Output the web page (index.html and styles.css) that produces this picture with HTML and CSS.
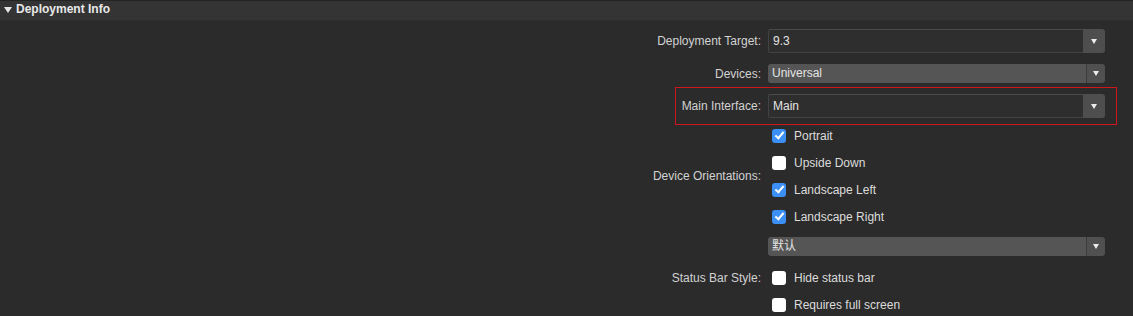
FILE: index.html
```html
<!DOCTYPE html>
<html lang="en">
<head>
    <meta charset="UTF-8">
    <title>Deployment Info</title>
    <link rel="stylesheet" href="styles.css">
</head>
<body>
    <div class="section">
        <div class="section-header">
            <span class="disclosure"></span>
            <span class="section-title">Deployment Info</span>
        </div>

        <div class="form">
            <div class="row row-target">
                <div class="label">Deployment Target:</div>
                <div class="combo">
                    <div class="combo-field">9.3</div>
                    <div class="combo-btn"><span class="arrow"></span></div>
                </div>
            </div>

            <div class="row row-devices">
                <div class="label">Devices:</div>
                <div class="popup">
                    <div class="popup-field">Universal</div>
                    <div class="popup-btn"><span class="arrow"></span></div>
                </div>
            </div>

            <div class="row row-main highlighted">
                <div class="label">Main Interface:</div>
                <div class="combo">
                    <div class="combo-field">Main</div>
                    <div class="combo-btn"><span class="arrow"></span></div>
                </div>
            </div>

            <div class="row row-orient">
                <div class="label">Device Orientations:</div>
                <div class="checks">
                    <label class="check"><span class="box checked"></span>Portrait</label>
                    <label class="check"><span class="box"></span>Upside Down</label>
                    <label class="check"><span class="box checked"></span>Landscape Left</label>
                    <label class="check"><span class="box checked"></span>Landscape Right</label>
                </div>
            </div>

            <div class="row row-status">
                <div class="label">Status Bar Style:</div>
                <div class="checks">
                    <div class="popup">
                        <div class="popup-field cjk">默认</div>
                        <div class="popup-btn"><span class="arrow"></span></div>
                    </div>
                    <label class="check"><span class="box"></span>Hide status bar</label>
                    <label class="check"><span class="box"></span>Requires full screen</label>
                </div>
            </div>
        </div>
    </div>
</body>
</html>
```

FILE: styles.css
```css
html, body {
    margin: 0;
    padding: 0;
}
body {
    font-family: "Liberation Sans", Arial, sans-serif;
    font-size: 12px;
    background-color: #2b2b2b;
    color: #d6d6d6;
    width: 1133px;
    height: 316px;
    overflow: hidden;
}
.section-header {
    height: 19px;
    display: flex;
    align-items: center;
    background-color: #343434;
    border-top: 1px solid #232323;
    border-bottom: 1px solid #2e2e2e;
    padding-left: 4px;
}
.disclosure {
    width: 0;
    height: 0;
    border-left: 4px solid transparent;
    border-right: 4px solid transparent;
    border-top: 6px solid #e6e6e6;
    margin-right: 4px;
    margin-top: -2px;
}
.section-title {
    font-weight: bold;
    color: #e8e8e8;
    margin-top: -3px;
}
.form {
    padding-top: 8px;
}
.row {
    display: flex;
    align-items: center;
}
.label {
    width: 761px;
    text-align: right;
    margin-right: 7px;
    color: #d2d2d2;
}
.row-devices {
    margin-top: 11px;
}
.row-main {
    margin-top: 11px;
}
.row-orient {
    margin-top: 4px;
}
.row-status {
    margin-top: 7px;
}
.highlighted {
    position: relative;
}
.highlighted::after {
    content: "";
    position: absolute;
    left: 675px;
    top: -7px;
    width: 440px;
    height: 36px;
    border: 1px solid #d0161b;
}

/* combo box: text field + button */
.combo {
    width: 337px;
    height: 24px;
    display: flex;
}
.combo-field {
    flex: 1;
    background-color: #2e2e2e;
    border: 1px solid #424242;
    border-top-color: #4a4a4a;
    border-right: none;
    border-radius: 2px 0 0 2px;
    color: #e4e4e4;
    padding-left: 4px;
    line-height: 22px;
}
.combo-btn {
    width: 22px;
    background-color: #4e4e4e;
    border-radius: 0 3px 3px 0;
    display: flex;
    align-items: center;
    justify-content: center;
}

/* popup button */
.popup {
    width: 337px;
    height: 19px;
    display: flex;
    border-radius: 3px;
    overflow: hidden;
}
.popup-field {
    flex: 1;
    background-color: #555555;
    color: #e4e4e4;
    padding-left: 4px;
    line-height: 19px;
}
.popup-btn {
    width: 18px;
    background-color: #505050;
    border-left: 1px solid #3c3c3c;
    display: flex;
    align-items: center;
    justify-content: center;
}
.cjk {
    font-family: "Liberation Sans", "Noto Sans CJK SC", sans-serif;
}
.arrow {
    width: 0;
    height: 0;
    border-left: 3.5px solid transparent;
    border-right: 3.5px solid transparent;
    border-top: 5px solid #ececec;
}

/* checkboxes */
.checks {
    display: flex;
    flex-direction: column;
}
.check {
    display: flex;
    align-items: center;
    height: 27px;
    color: #dcdcdc;
    padding-left: 4px;
}
.box {
    width: 14px;
    height: 14px;
    border-radius: 3px;
    background-color: #ffffff;
    margin-right: 8px;
    position: relative;
}
.box.checked {
    background-color: #3b8ff5;
}
.box.checked::after {
    content: "";
    position: absolute;
    left: 4.5px;
    top: 1.5px;
    width: 3px;
    height: 7px;
    border-right: 2px solid #ffffff;
    border-bottom: 2px solid #ffffff;
    transform: rotate(40deg);
}
.row-status .popup {
    margin-bottom: 8px;
}
```
